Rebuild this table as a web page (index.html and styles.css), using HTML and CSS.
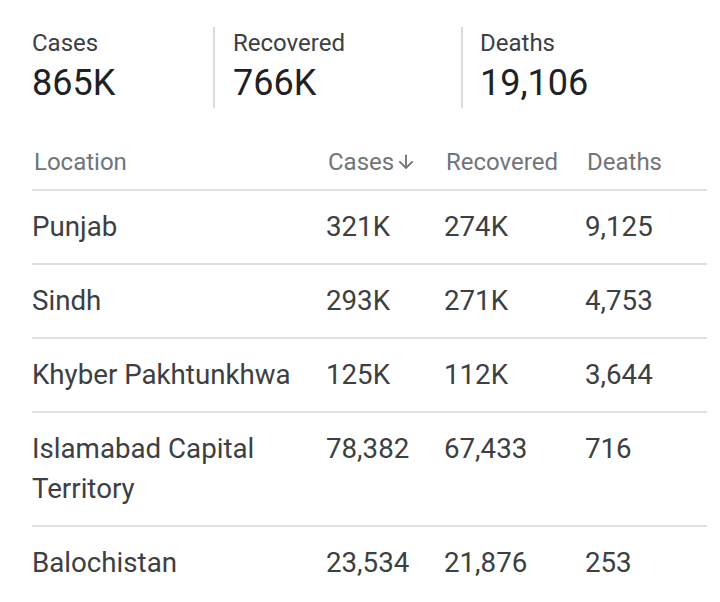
FILE: index.html
```html
<!DOCTYPE html>
<html lang="en">
<head>
<meta charset="utf-8">
<title>Pakistan COVID-19</title>
<link rel="stylesheet" href="styles.css">
</head>
<body>
<div class="page">
  <div class="summary">
    <div class="stat stat-cases">
      <div class="stat-label">Cases</div>
      <div class="stat-value">865K</div>
    </div>
    <div class="stat stat-recovered">
      <div class="stat-label">Recovered</div>
      <div class="stat-value">766K</div>
    </div>
    <div class="stat stat-deaths">
      <div class="stat-label">Deaths</div>
      <div class="stat-value">19,106</div>
    </div>
  </div>

  <div class="table">
    <div class="row head">
      <div class="cell">Location</div>
      <div class="cell sorted">Cases<svg class="arrow" viewBox="0 0 24 24" width="22" height="22"><path d="M20 12l-1.41-1.41L13 16.17V4h-2v12.17l-5.58-5.59L4 12l8 8 8-8z" fill="currentColor"/></svg></div>
      <div class="cell">Recovered</div>
      <div class="cell">Deaths</div>
    </div>
    <div class="row">
      <div class="cell">Punjab</div>
      <div class="cell">321K</div>
      <div class="cell">274K</div>
      <div class="cell">9,125</div>
    </div>
    <div class="row">
      <div class="cell">Sindh</div>
      <div class="cell">293K</div>
      <div class="cell">271K</div>
      <div class="cell">4,753</div>
    </div>
    <div class="row">
      <div class="cell">Khyber Pakhtunkhwa</div>
      <div class="cell">125K</div>
      <div class="cell">112K</div>
      <div class="cell">3,644</div>
    </div>
    <div class="row">
      <div class="cell">Islamabad Capital Territory</div>
      <div class="cell">78,382</div>
      <div class="cell">67,433</div>
      <div class="cell">716</div>
    </div>
    <div class="row last">
      <div class="cell">Balochistan</div>
      <div class="cell">23,534</div>
      <div class="cell">21,876</div>
      <div class="cell">253</div>
    </div>
  </div>
</div>
</body>
</html>
```

FILE: styles.css
```css
html, body {
  margin: 0;
  padding: 0;
  background: #ffffff;
}

body {
  font-family: Roboto, "Liberation Sans", Arial, sans-serif;
  color: #3c4043;
}

.page {
  padding: 27px 13px 0 32px;
}

.summary {
  display: flex;
}

.stat {
  padding: 2px 0 4px;
  box-sizing: border-box;
  height: 81px;
}

.stat-cases {
  width: 181px;
}

.stat-recovered {
  width: 248px;
  border-left: 2px solid #dadce0;
  padding-left: 18px;
}

.stat-deaths {
  border-left: 2px solid #dadce0;
  padding-left: 17px;
}

.stat-label {
  font-size: 24px;
  line-height: 28px;
  color: #3c4043;
}

.stat-value {
  margin-top: 5px;
  font-size: 36px;
  line-height: 42px;
  color: #202124;
}

.table {
  margin-top: 40px;
  width: 675px;
}

.row {
  display: grid;
  grid-template-columns: 294px 118px 141px 122px;
  border-bottom: 2px solid #dfe0e4;
  font-size: 27.7px;
  line-height: 40px;
  color: #3c4043;
}

.row .cell {
  padding: 16px 0;
}

.row .cell:first-child {
  padding-right: 20px;
}

.row.last {
  border-bottom: none;
}

.row.head {
  font-size: 24px;
  line-height: 28px;
  color: #70757a;
}

.row.head .cell {
  padding: 0 0 13px 2px;
}

.sorted {
  display: flex;
  align-items: center;
}

.arrow {
  display: block;
  margin-left: 1px;
  color: #70757a;
}
```
